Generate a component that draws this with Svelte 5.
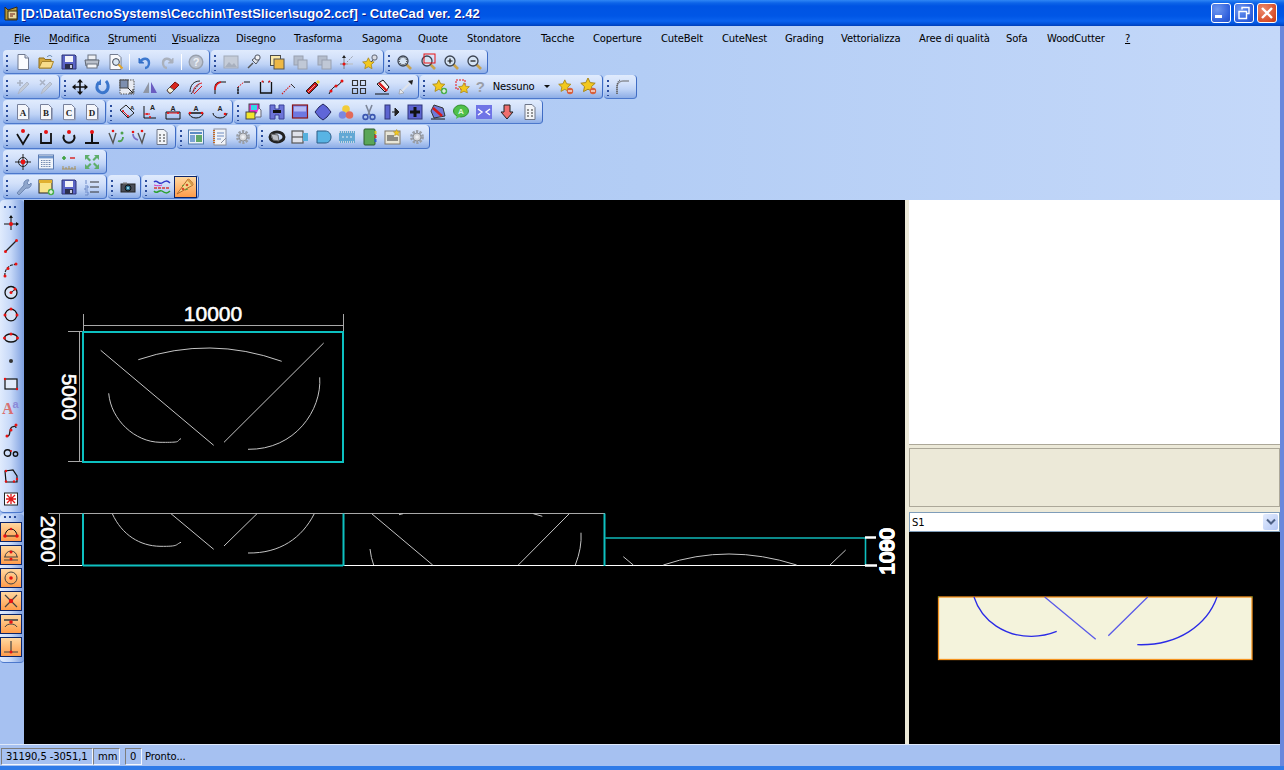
<script>
  const dot = (x, y, s = 1.5) => `<circle cx="${x}" cy="${y}" r="${s}" fill="#e81212"/>`;
  const star = (x, y, k, f = '#f2c81e') =>
    `<path transform="translate(${x} ${y}) scale(${k})" d="M8 1l2.2 4.6 5 .6-3.7 3.4 1 5L8 12.2 3.5 14.6l1-5L.8 6.2l5-.6z" fill="${f}" stroke="#a8861a" stroke-width="1"/>`;
  const badge = (x, y, c, plus) =>
    `<circle cx="${x}" cy="${y}" r="3.2" fill="${c}"/><path d="M${x - 2} ${y}h4${plus ? `M${x} ${y - 2}v4` : ''}" stroke="#fff" stroke-width="1.2"/>`;
  const doc = (t) =>
    `<path d="M2.5 .5h8l3 3v12h-11z" fill="#f4f6fb" stroke="#77809a"/><path d="M14.5 4v12h-11" fill="none" stroke="#9aa6c4"/><text x="8" y="12" font-size="9" font-weight="700" text-anchor="middle" font-family="Liberation Serif" fill="#222">${t}</text>`;
  const mag = (inner = '') =>
    `<path d="M10 10l5 5" stroke="#c9a24a" stroke-width="2.6"/><circle cx="7" cy="7" r="5" fill="#d6e4f4" stroke="#3c4452" stroke-width="1.3"/>${inner}`;
  const pencil = (mark) =>
    `<path d="M3 15l2-5 7-7 2 2-7 7z" fill="#c3cbd8" stroke="#a9b2c4" stroke-width=".8"/>${mark}`;
  const gear = `<circle cx="8" cy="8" r="5.4" fill="none" stroke="#9a9fa8" stroke-width="3" stroke-dasharray="2.2 1.2"/><circle cx="8" cy="8" r="4" fill="#d4d6da" stroke="#8d9198"/><circle cx="8" cy="8" r="1.7" fill="#eef0f4"/>`;
  const grayStack = `<rect x="2" y="2" width="9" height="9" fill="#b4bdcc" stroke="#98a0b0"/><rect x="6" y="6" width="9" height="9" fill="#c0c8d6" stroke="#98a0b0"/>`;
  const listDoc = `<path d="M3 .5h7l3 3v12H3z" fill="#f2f4f8" stroke="#6e7688"/><path d="M5 6h2M9 6h2M5 9h2M9 9h2M5 12h2M9 12h2" stroke="#333"/>`;
  const save = `<path d="M1 1h13l1 1v13H1z" fill="#5a64c6" stroke="#2f3578"/><rect x="4" y="2" width="8" height="6" fill="#f2f3f8"/><rect x="4" y="10" width="8" height="5" fill="#2c2f4c"/><rect x="9" y="11" width="2" height="3" fill="#c8cadd"/>`;

  const icons = {
    new: `<path d="M3 .5h7l3.5 3.5v11.5H3z" fill="#fbfcff" stroke="#6f7990"/><path d="M10 .5V4h3.5" fill="#d5dae6" stroke="#6f7990"/>`,
    open: `<path d="M1 4h5l1 1.5h6V14H1z" fill="#d5a93f" stroke="#8d6c1c"/><path d="M1 14l3-6.5h11.5L13 14z" fill="#f8dc8a" stroke="#a8842c"/><path d="M9 3c2-2 4-2 5 0" fill="none" stroke="#5b7fa8"/>`,
    save,
    print: `<rect x="4" y="1" width="8" height="5" fill="#eef0f4" stroke="#6a7280"/><path d="M1 6h14l-1 6H2z" fill="#b9bfca" stroke="#5f6672"/><rect x="3" y="10" width="10" height="4" fill="#f3f4f7" stroke="#6a7280"/>`,
    preview: `<path d="M2 .5h8l3 3v12H2z" fill="#f8f9fc" stroke="#737c90"/><circle cx="8" cy="8" r="3.4" fill="#d9e6f3" stroke="#3f4654"/><path d="M10.5 10.5l4 4" stroke="#e2a52a" stroke-width="2"/>`,
    undo: `<path d="M3 4v5h5" fill="#2f6bc4" stroke="#2f6bc4"/><path d="M4 8c3-5 9-4 9 1 0 3-2 5-4 5" fill="none" stroke="#3c78cf" stroke-width="2.4"/>`,
    redo: `<path d="M13 4v5H8" fill="#a9b0bc" stroke="#a9b0bc"/><path d="M12 8c-3-5-9-4-9 1 0 3 2 5 4 5" fill="none" stroke="#aab1bd" stroke-width="2.4"/>`,
    help: `<circle cx="8" cy="8" r="6.8" fill="#bcc3cf" stroke="#98a0ad" stroke-width="1.4"/><text x="8" y="12" font-size="11" font-weight="700" text-anchor="middle" font-family="Liberation Sans" fill="#eef1f6">?</text>`,
    image: `<rect x="1" y="2" width="14" height="12" fill="#c5ccd8" stroke="#a1a9b8"/><path d="M2 13l4-5 3 3 2-2 3 4z" fill="#a8b0be"/>`,
    pin: `<path d="M2 14l5-5" stroke="#555" stroke-width="1.4"/><path d="M6 6l4-3 3 3-3 4z" fill="#dfe2e8" stroke="#4f5562"/><rect x="9" y="1" width="5" height="5" rx="2" fill="#f2f3f6" stroke="#4f5562"/>`,
    copyYellow: `<rect x="1.5" y="1.5" width="10" height="10" fill="#fbe9a8" stroke="#4c4c4c"/><rect x="5" y="5" width="10" height="10" fill="#eeb845" stroke="#555"/>`,
    grayStack,
    axes: `<path d="M5 15V2M1 10h8" stroke="#777" stroke-width=".9"/><path d="M5 1l-2 3h4z" fill="#222"/><path d="M6 10l8-8" stroke="#888" stroke-dasharray="1.5 1.5"/><path d="M6 10h8" stroke="#bbb"/>${dot(5, 10)}`,
    starPin: `${star(0, 3, 0.8)}<path d="M9 8l3-3" stroke="#555"/><rect x="10" y="1" width="5" height="5" rx="2" fill="#d9dce4" stroke="#5f6572"/>`,
    zoomDots: mag(`<circle cx="7" cy="7" r="3.6" fill="none" stroke="#222" stroke-dasharray="1 1"/>`),
    zoomRect: mag(`<rect x="4" y="0" width="11" height="9" fill="none" stroke="#e81212"/>`),
    zoomIn: mag(`<path d="M4.5 7h5M7 4.5v5" stroke="#111" stroke-width="1.2"/>`),
    zoomOut: mag(`<path d="M4.5 7h5" stroke="#111" stroke-width="1.2"/>`),
    penPlus: pencil(`<path d="M2 4h6M5 1v6" stroke="#a9b2c4" stroke-width="1.6"/>`),
    penX: pencil(`<path d="M2 1l5 5M7 1L2 6" stroke="#a9b2c4" stroke-width="1.6"/>`),
    move: `<path d="M8 1v14M1 8h14" stroke="#111" stroke-width="1.6"/><path d="M8 0l-3 3.5h6zM8 16l-3-3.5h6zM0 8l3.5-3v6zM16 8l-3.5-3v6z" fill="#111"/>`,
    rotate: `<path d="M4 3c-3 3-3 8 1 10 4 2 9-1 8-7-.3-2-1-3-2-4" fill="none" stroke="#3b76cc" stroke-width="3"/><path d="M6 0v6H1z" fill="#3b76cc"/>`,
    scale: `<rect x="1" y="1" width="14" height="14" fill="#e8ebf2" stroke="#555" stroke-dasharray="1.5 1"/><rect x="1" y="1" width="8" height="8" fill="#7e8fae" stroke="#444"/><path d="M9 9l5 5M14 10v4h-4" fill="none" stroke="#222"/>`,
    mirror: `<path d="M7 3v11H1z" fill="#8f96a4"/><path d="M9 3v11h6z" fill="#6a5cc0"/>`,
    eraser: `<path d="M2 11l8-8 4 3-8 8H4z" fill="#d8261e" stroke="#7a1410"/><path d="M2 11l3-3 4 3-3 3H4z" fill="#f6f0d8" stroke="#555"/>`,
    offset: `<path d="M2 13C2 6 6 2 12 2" fill="none" stroke="#222"/><path d="M5 14C5 9 9 5 14 4" fill="none" stroke="#e81212"/><path d="M6 15L14 7" stroke="#e81212"/><path d="M3 15L11 5" stroke="#333" stroke-dasharray="2 1"/>`,
    fillet: `<path d="M3 15V8c0-3 2-5 5-5h6" fill="none" stroke="#111"/><path d="M3 11c0-4 2-7 6-8" fill="none" stroke="#e81212" stroke-width="1.6"/>`,
    chamfer: `<path d="M3 15V8M9 3h6" fill="none" stroke="#111"/><path d="M3 8l6-5" stroke="#e81212" stroke-dasharray="1.500 1"/><path d="M3 15V8" stroke="#111" stroke-dasharray="2 1"/>`,
    notch: `<path d="M2.500 3v11h11V3" fill="none" stroke="#111" stroke-width="1.300"/><path d="M5 3h1M10 3h1" stroke="#111"/>${dot(4.500, 2.500, 1)}${dot(11.500, 2.500, 1)}`,
    dashLine: `<path d="M1 15L10 6" stroke="#d81818" stroke-width="1.100" stroke-dasharray="1.500 1"/><path d="M10 5l4 4" stroke="#333"/>`,
    rocket: `<path d="M1 12l9-9 3 3-9 9z" fill="#c81818" stroke="#222"/><path d="M11 3l2-2 2 2-2 2z" fill="#f2d030"/><path d="M3 13l7-7" stroke="#f4a0a0"/>`,
    polyline: `<path d="M1 15c2-4 4-7 7-8s5-3 6-6" fill="none" stroke="#111"/>${dot(3, 12)}${dot(8, 7)}${dot(14, 2)}`,
    grid: `<path d="M1.5 1.5h5v5h-5zM9.5 1.5h5v5h-5zM1.5 9.5h5v5h-5zM9.5 9.5h5v5h-5z" fill="none" stroke="#333" stroke-width="1.1"/>`,
    tool: `<path d="M3 5l6-4 6 7-4 5z" fill="#f4f4f4" stroke="#111"/><path d="M5 4l8 8" stroke="#d81818" stroke-width="2.4"/><path d="M1 15h14" stroke="#111"/>`,
    arrows: `<path d="M3 13L13 3" stroke="#dfe3ea" stroke-width="2.200"/><path d="M15 1l-1 5-4-4z" fill="#222"/><path d="M1 15l1-5 4 4z" fill="#e4e7ee" stroke="#888" stroke-width=".5"/>`,
    starPlus: `${star(0, 0, 0.85)}${badge(12, 12, '#4caf4c', true)}`,
    starBox: `<path d="M1 1h9v9H1z" fill="none" stroke="#e81212" stroke-dasharray="2 1"/>${star(3, 3, 0.75)}`,
    starMinus: `${star(0, 0, 0.85)}${badge(12, 12, '#d8603c', false)}`,
    starMinus2: `${star(-1, -2, 1)}${badge(12, 12, '#d8603c', false)}`,
    filletGray: `<path d="M2 15V8c0-4 3-6 6-6h6" fill="none" stroke="#8b8f98" stroke-width="1.4"/><path d="M2 15V7c0-3 1-5 3-6" fill="none" stroke="#444" stroke-dasharray="1 1"/>`,
    docA: doc('A'),
    docB: doc('B'),
    docC: doc('C'),
    docD: doc('D'),
    dim1: `<path d="M1 6l6-5 8 8-6 5z" fill="none" stroke="#222"/><path d="M4 7l5 5" stroke="#e81212"/>${dot(4, 7, 1)}${dot(9, 12, 1)}<text x="11" y="6" font-size="6" font-weight="700" font-family="Liberation Sans" fill="#222">A</text>`,
    dim2: `<path d="M2 2v12h12" fill="none" stroke="#111"/><path d="M2 10l6 0" stroke="#e81212"/>${dot(5, 10, 1)}${dot(8, 13, 1)}<text x="8" y="6" font-size="7" font-weight="700" font-family="Liberation Sans" fill="#222">A</text>`,
    dim3: `<path d="M1 8h14v7H1z" fill="none" stroke="#111"/><path d="M2 9h12" stroke="#e81212"/>${dot(3, 9, 1)}${dot(13, 9, 1)}<text x="8" y="7" font-size="7" font-weight="700" text-anchor="middle" font-family="Liberation Sans" fill="#222">A</text>`,
    dim4: `<path d="M1 9a7 5 0 0 0 14 0z" fill="none" stroke="#111"/><path d="M1 9h14" stroke="#111"/>${dot(2, 9, 1.3)}${dot(14, 9, 1.3)}<text x="8" y="7" font-size="7" font-weight="700" text-anchor="middle" font-family="Liberation Sans" fill="#222">A</text>`,
    dim5: `<path d="M1 9a7 5 0 0 0 14 0" fill="none" stroke="#111"/>${dot(13, 10, 1.3)}<text x="8" y="7" font-size="7" font-weight="700" text-anchor="middle" font-family="Liberation Sans" fill="#222">A</text>`,
    colorFile: `<rect x="3" y="0" width="10" height="9" fill="#ea2fd0" stroke="#444"/><rect x="5" y="1" width="6" height="5" fill="#33d8e8"/><rect x="0" y="8" width="9" height="7" fill="#f2e62a" stroke="#444"/><path d="M13 4l2 2v7H9" fill="#e8ecf2" stroke="#667"/>`,
    hMinus: `<path d="M1 1h5v4h4V1h5v14h-5v-4H6v4H1z" fill="#6c74d8" stroke="#3a4098"/><rect x="4" y="6" width="8" height="3" fill="#111"/>`,
    blueRect: `<rect x=".5" y="1" width="15" height="13" fill="#6e78e2" stroke="#8c1414" stroke-width="1.2"/><rect x="2" y="2.5" width="12" height="5" fill="#b4baf4"/>`,
    blueBlob: `<path d="M4 3l4-3 4 3 4 5-4 5-4 3-4-3-4-5z" fill="#5f66d8" stroke="#23255e"/>`,
    circles: `<circle cx="8" cy="5" r="3.8" fill="#f2cc3a"/><circle cx="4.5" cy="11" r="3.8" fill="#7a88e0"/><circle cx="11.5" cy="11" r="3.8" fill="#e26a5a"/>`,
    scissors: `<path d="M5 1l4 10M11 1L7 11" stroke="#7d8698" stroke-width="1.6"/><circle cx="4.5" cy="13" r="2.4" fill="none" stroke="#3b56b0" stroke-width="1.6"/><circle cx="11.5" cy="13" r="2.4" fill="none" stroke="#3b56b0" stroke-width="1.6"/>`,
    barArrow: `<rect x="1" y="1" width="5" height="14" fill="#5c64d0" stroke="#2f3578"/><path d="M8 8h4M11 4l4 4-4 4z" fill="#222" stroke="#222"/>`,
    plusBox: `<rect x="1" y="1" width="14" height="14" fill="#5c64d0" stroke="#2f3578"/><path d="M8 3v10M3 8h10" stroke="#111" stroke-width="3"/>`,
    penCircle: `<path d="M4 1l9 3 2 8-11 2-3-7z" fill="#6e78d6" stroke="#333"/><path d="M3 4l9 8" stroke="#d81818" stroke-width="2.4"/><path d="M1 15h14" stroke="#111"/>`,
    speech: `<ellipse cx="8" cy="7" rx="7.5" ry="6" fill="#4fc04a" stroke="#2f8c2c"/><path d="M4 11l-1 4 5-3z" fill="#4fc04a"/><text x="8" y="10" font-size="8" font-weight="700" text-anchor="middle" font-family="Liberation Sans" fill="#dff5dc">A</text>`,
    compress: `<rect x="0" y="1" width="16" height="14" fill="#6f74e6"/><path d="M2 5l4 3-4 3M14 5l-4 3 4 3" fill="none" stroke="#fff" stroke-width="1.4"/>`,
    down: `<path d="M5 1h6v7h3l-6 7-6-7h3z" fill="#ef6e6e" stroke="#222"/>`,
    listDoc,
    vDot: `<path d="M2 5l6 10 6-10" fill="none" stroke="#111" stroke-width="1.7"/>${dot(8, 2, 2)}`,
    uDot: `<path d="M3 4v10h10V4" fill="none" stroke="#111" stroke-width="1.8"/>${dot(8, 3, 2)}`,
    arcDot: `<path d="M3 6a5.5 5.5 0 1 0 10 0" fill="none" stroke="#111" stroke-width="2"/>${dot(8, 3, 2)}`,
    tDot: `<path d="M8 4v9M1 14h14" stroke="#111" stroke-width="2"/>${dot(8, 3, 2)}`,
    vGreen: `<path d="M1 4l4 10 3-10" fill="none" stroke="#555" stroke-width="1.4"/>${dot(5, 2, 1.3)}<path d="M10 12c3 1 5-1 5-4" fill="none" stroke="#4ca04c" stroke-width="1.8"/><circle cx="14" cy="4" r="1.5" fill="#4ca04c"/>`,
    vPurple: `<path d="M7 4l4 10 3-10" fill="none" stroke="#555" stroke-width="1.4"/>${dot(2, 3, 1.3)}<path d="M2 5c0 3 2 5 5 6" fill="none" stroke="#7a70c8" stroke-width="1.8"/>${dot(11, 2, 1.3)}`,
    layout: `<rect x=".5" y="1" width="15" height="14" fill="#eef2f8" stroke="#4f7cb0"/><rect x="2" y="3" width="12" height="2" fill="#5c8cc4"/><rect x="2" y="6" width="5" height="7" fill="#7ca4d4"/><rect x="8" y="6" width="6" height="7" fill="#5fa86a"/>`,
    notebook: `<rect x="2" y="0" width="12" height="16" fill="#f0f3f8" stroke="#8a90a0"/><path d="M2 1v14" stroke="#c86820" stroke-width="2" stroke-dasharray="1 1"/><path d="M5 4h7M5 7h7M5 10h4" stroke="#6c8ac0"/><path d="M9 14l5-5" stroke="#8a90a0"/>`,
    gear,
    ring: `<ellipse cx="8" cy="8" rx="7" ry="5" fill="none" stroke="#222" stroke-width="3"/><path d="M2 5l7 1 1 6-6-1z" fill="#bcc0c8" stroke="#666"/>`,
    boxBlue: `<rect x="0" y="2" width="11" height="12" fill="#dfe2ea" stroke="#555" stroke-width="1.2"/><path d="M0 8h11" stroke="#555" stroke-width="1.2"/><rect x="11" y="4" width="5" height="8" fill="#56b0dc"/>`,
    dShape: `<path d="M1 2h8c4 0 6 3 6 6s-2 6-6 6H1z" fill="#58b4e4" stroke="#2c5c86"/>`,
    film: `<rect x="0" y="2" width="16" height="12" fill="#62a8d4"/><path d="M0 3h16M0 13h16" stroke="#c8d4e0" stroke-dasharray="1 1" stroke-width="2"/><path d="M3 8h2M7 8h2M11 8h2" stroke="#e8eef6"/>`,
    greenBook: `<rect x="2" y="0" width="11" height="16" rx="1" fill="#5aa658" stroke="#2c5c2c"/><path d="M13.5 2v3" stroke="#d8c820" stroke-width="2"/><path d="M13.5 6v3" stroke="#d83030" stroke-width="2"/><path d="M13.5 10v3" stroke="#3060d0" stroke-width="2"/>`,
    noteStar: `<rect x="0" y="2" width="15" height="13" fill="#e8e6d8" stroke="#80786a"/><path d="M2 7h7M2 9h11M2 11h11" stroke="#333"/>${star(8, 0, 0.45)}`,
    cross: `<path d="M8 0v16M0 8h16" stroke="#222"/><circle cx="8" cy="8" r="4.5" fill="none" stroke="#222"/>${dot(8, 8, 2.4)}`,
    listWin: `<rect x=".5" y="1" width="15" height="14" fill="#f0f4fa" stroke="#5a7ab0"/><rect x="1" y="2" width="14" height="2.4" fill="#7398cc"/><path d="M3 6.5h10M3 8.5h10M3 10.5h10M3 12.5h10" stroke="#6c84ac" stroke-dasharray="1 .6"/>`,
    ruler: `<path d="M1 4h4M3 2v4" stroke="#3ca03c" stroke-width="1.6"/><path d="M9 4h5" stroke="#d83838" stroke-width="1.6"/><path d="M1 15h14M2 15v-3M5 15v-2M8 15v-3M11 15v-2M14 15v-3" stroke="#a89058"/>`,
    greenArrows: `<path d="M1 1h5L4 3l3 3-1.500 1.500L2.500 4.500 1 6zM15 1v5l-2-2-3 3-1.500-1.500 3-3L10 1zM1 15v-5l2 2 3-3 1.500 1.500-3 3L6 15zM15 15h-5l2-2-3-3 1.500-1.500 3 3L15 10z" fill="#5fae6a"/>`,
    wrench: `<path d="M2 14l7-8c-1-3 2-6 5-5l-2 3 2 2 2-2c1 3-2 6-5 5l-7 7z" fill="#8fa6cc" stroke="#6f88b4"/>`,
    yellowWin: `<rect x="1" y="1" width="13" height="13" fill="#f8e48a" stroke="#222"/><rect x="1" y="1" width="13" height="3" fill="#e0b030"/>${badge(13, 13, '#4caf4c', true)}`,
    numList: `<path d="M6 3h9M6 8h9M6 13h9" stroke="#333" stroke-width="1.2"/><path d="M2 1v4M1 7h3v2H1v2h3M1 13h3v3H1" fill="none" stroke="#6c8ac8"/>`,
    camera: `<rect x="1" y="5" width="14" height="8" fill="#4a4e58" stroke="#222"/><rect x="3" y="3.500" width="4" height="2" fill="#777"/><circle cx="8" cy="9" r="3" fill="#2a6a88" stroke="#111"/><circle cx="8" cy="9" r="1.200" fill="#8cd0e0"/>`,
    waves: `<path d="M0 3c3-3 5 3 8 1s5-3 8 0" fill="none" stroke="#2f38c8" stroke-width="1.500"/><path d="M0 9h16" stroke="#d83838" stroke-width="1.500" stroke-dasharray="3 1"/><path d="M0 12c3 4 5-2 8 0s5 3 8 0" fill="none" stroke="#2ca030" stroke-width="1.500"/><path d="M0 6c3 1 6 1 8 0" stroke="#d030c0" fill="none"/>`,
    pizza: `<path d="M0 15L11 0c3 1 5 4 5 6L0 15z" fill="#f4d68a" stroke="#b86a28"/><path d="M11 0c3 1 5 4 5 6l-1.500 1c-1-2-2.500-4-4.500-5.500z" fill="#d89a4a"/><circle cx="6" cy="10" r="1.300" fill="#d84a2a"/><circle cx="10" cy="6" r="1.300" fill="#d84a2a"/><path d="M8 11l3-1M5 7l2-1" stroke="#5a9a3a"/>`,
    lAxes: `<path d="M8 1v14M1 9h14" stroke="#111"/><path d="M8 0l-2 3h4zM16 9l-3-2v4z" fill="#111"/>${dot(8, 9, 2)}`,
    lLine: `<path d="M3 13L13 3" stroke="#222" stroke-width="1.200"/>${dot(2.500, 13.500)}${dot(13.500, 2.500)}`,
    lArc: `<path d="M2 15c-1-5 3-10 7-11l5-1" fill="none" stroke="#222" stroke-dasharray="3 1" stroke-width="1.200"/>${dot(2, 15)}${dot(5, 7.500)}${dot(13, 3)}`,
    lCircleR: `<circle cx="8" cy="8.500" r="6" fill="#d6e2f6" stroke="#111" stroke-width="1.300"/><path d="M8 8.500l4-3" stroke="#222"/>${dot(8, 8.500)}${dot(12, 5)}`,
    lCircle: `<circle cx="8" cy="8" r="5.800" fill="#d6e2f6" stroke="#111" stroke-width="1.300"/>${dot(8, 2)}${dot(2, 8)}${dot(14, 8)}`,
    lEllipse: `<ellipse cx="8" cy="8" rx="6.500" ry="4" fill="#d6e2f6" stroke="#111" stroke-width="1.300"/>${dot(8, 4)}${dot(1.500, 8)}${dot(14.500, 8)}`,
    lPoint: `<circle cx="8" cy="8" r="2" fill="#333"/>`,
    lRect: `<rect x="2" y="3" width="12" height="10" fill="#e2ebfa" stroke="#111" stroke-width="1.200"/>${dot(2, 3, 1.200)}${dot(14, 13, 1.200)}`,
    lText: `<text x="-1" y="15" font-size="16" font-family="Liberation Serif" font-weight="700" fill="#d87070">A</text><text x="9.500" y="9" font-size="11" font-weight="700" font-family="Liberation Sans" fill="#8a8ad8">a</text>`,
    lSpline: `<path d="M3 14c6 1 2-7 6-9 2-1 4-1 4 1" fill="none" stroke="#222" stroke-width="1.300"/>${dot(4, 14)}${dot(8, 8)}${dot(13, 3)}`,
    lOo: `<circle cx="4.500" cy="8" r="3.200" fill="none" stroke="#111" stroke-width="1.400"/><circle cx="12.500" cy="9" r="2.200" fill="none" stroke="#111" stroke-width="1.400"/>${dot(8, 6, 1)}`,
    lPoly: `<path d="M2 3l8-1 4 6v6H3z" fill="none" stroke="#111" stroke-width="1.200"/>${dot(3, 3, 1.200)}${dot(11, 13.500, 1.200)}${dot(3, 13.500, 1.200)}${dot(14, 11, 1.200)}`,
    lRedBox: `<rect x="1.500" y="2" width="13" height="12" fill="#fff" stroke="#222"/><path d="M8 3v10M3 8h10M4 4l8 8M12 4l-8 8" stroke="#e01818" stroke-width="1.300"/>`,
    sArc: `<path d="M2 12a6 7 0 0 1 12 0" fill="none" stroke="#111"/><path d="M2 12h12" stroke="#111"/>${dot(2, 12, 1.800)}${dot(14, 12, 1.800)}${dot(8, 5, 1.200)}`,
    sArc2: `<path d="M2 10a6 6 0 0 1 12 0" fill="none" stroke="#444"/><path d="M1 10h14" stroke="#444"/><path d="M1 13h14" stroke="#444"/>${dot(8, 5, 1.500)}${dot(8, 12, 1.500)}`,
    sCircle: `<circle cx="8" cy="8" r="6" fill="none" stroke="#444"/>${dot(8, 8, 1.800)}`,
    sCross: `<path d="M2 2l12 12M14 2L2 14" stroke="#444" stroke-width="1.200"/>${dot(8, 8, 2.200)}`,
    sTop: `<path d="M1 4h14" stroke="#444" stroke-width="1.600"/><path d="M2 11c2-4 10-4 12 0" fill="none" stroke="#444"/>${dot(8, 6, 1.800)}`,
    sPerp: `<path d="M8 2v11M1 13h14" stroke="#444" stroke-width="1.200"/>${dot(8, 13, 1.500)}`
  };

  const rows = [
    [
      ['new', 'open', 'save', 'print', 'preview', 'sep', 'undo', 'redo', 'sep', 'help'],
      ['image', 'pin', 'copyYellow', 'grayStack', 'grayStack', 'axes', 'starPin'],
      ['zoomDots', 'zoomRect', 'zoomIn', 'zoomOut']
    ],
    [
      ['penPlus', 'penX'],
      ['move', 'rotate', 'scale', 'mirror', 'eraser', 'offset', 'fillet', 'chamfer', 'notch', 'dashLine', 'rocket', 'polyline', 'grid', 'tool', 'arrows'],
      ['starPlus', 'starBox', 'combo', 'starMinus', 'starMinus2'],
      ['filletGray']
    ],
    [
      ['docA', 'docB', 'docC', 'docD'],
      ['dim1', 'dim2', 'dim3', 'dim4', 'dim5'],
      ['colorFile', 'hMinus', 'blueRect', 'blueBlob', 'circles', 'scissors', 'barArrow', 'plusBox', 'penCircle', 'speech', 'compress', 'down', 'listDoc']
    ],
    [
      ['vDot', 'uDot', 'arcDot', 'tDot', 'vGreen', 'vPurple', 'listDoc'],
      ['layout', 'notebook', 'gear'],
      ['ring', 'boxBlue', 'dShape', 'film', 'greenBook', 'noteStar', 'gear']
    ],
    [['cross', 'listWin', 'ruler', 'greenArrows']],
    [['wrench', 'yellowWin', 'save', 'numList'], ['camera'], ['waves', 'pizza*']]
  ];

  const menus = [
    ['File', 14, true], ['Modifica', 49, true], ['Strumenti', 108, true], ['Visualizza', 172, true],
    ['Disegno', 236], ['Trasforma', 294], ['Sagoma', 362], ['Quote', 418], ['Stondatore', 467],
    ['Tacche', 541], ['Coperture', 593], ['CuteBelt', 661], ['CuteNest', 722], ['Grading', 785],
    ['Vettorializza', 841], ['Aree di qualità', 919], ['Sofa', 1006], ['WoodCutter', 1047], ['?', 1125, true]
  ];

  const drawTools = ['lAxes', 'lLine', 'lArc', 'lCircleR', 'lCircle', 'lEllipse', 'lPoint', 'lRect', 'lText', 'lSpline', 'lOo', 'lPoly', 'lRedBox'];
  const snapTools = ['sArc', 'sArc2', 'sCircle', 'sCross', 'sTop', 'sPerp'];

  const menuWidth = (i) => (i + 1 < menus.length ? menus[i + 1][1] - menus[i][1] : 40);
</script>

{#snippet icon(name)}
  <svg class="ico" viewBox="0 0 16 16" width="16" height="16">{@html icons[name]}</svg>
{/snippet}

<div class="app">
  <header class="titlebar">
    <svg class="logo" viewBox="0 0 16 16" width="16" height="16">
      <path d="M1 15V2l3 3 9-3v13z" fill="#b89a38" stroke="#3a2c10" />
      <rect x="4" y="6" width="9" height="8" fill="#e8d8a0" stroke="#3a2c10" />
      <path d="M6 9h5M6 11h3" stroke="#6a1818" />
    </svg>
    <span class="title">[D:\Data\TecnoSystems\Cecchin\TestSlicer\sugo2.ccf] - CuteCad ver. 2.42</span>
    <div class="caption">
      <button class="cap" aria-label="Riduci a icona"><i class="min"></i></button>
      <button class="cap" aria-label="Ripristina">
        <svg viewBox="0 0 14 14" width="14" height="14"><path d="M5 3.500V1.500h7v6h-2.500M2 5.500h7.500v7H2z" fill="none" stroke="#fff" stroke-width="1.400" /></svg>
      </button>
      <button class="cap close" aria-label="Chiudi">
        <svg viewBox="0 0 14 14" width="14" height="14"><path d="M2 2l10 10M12 2L2 12" stroke="#fff" stroke-width="2.400" /></svg>
      </button>
    </div>
  </header>

  <div class="frame">
    <div class="dock">
      <nav class="menubar">
        {#each menus as [label, , underline], i}
          <span class="menu" style="width:{menuWidth(i)}px">{#if underline}<u>{label[0]}</u>{label.slice(1)}{:else}{label}{/if}</span>
        {/each}
      </nav>

      {#each rows as row}
        <div class="row">
          {#each row as band}
            <div class="band">
              <i class="grip"></i>
              {#each band as name}
                {#if name === 'sep'}
                  <i class="sep"></i>
                {:else if name === 'combo'}
                  <div class="combo">
                    <b>?</b>
                    <span>Nessuno</span>
                    <i class="caret"></i>
                  </div>
                {:else if name.endsWith('*')}
                  <div class="btn on">{@render icon(name.slice(0, -1))}</div>
                {:else}
                  <div class="btn">{@render icon(name)}</div>
                {/if}
              {/each}
            </div>
          {/each}
        </div>
      {/each}
    </div>

    <main class="work">
      <aside class="side">
        <div class="vband">
          <i class="vgrip"></i>
          {#each drawTools as name}
            <div class="vbtn">{@render icon(name)}</div>
          {/each}
        </div>
        <div class="vband snaps">
          <i class="vgrip"></i>
          {#each snapTools as name}
            <div class="vbtn on">{@render icon(name)}</div>
          {/each}
        </div>
      </aside>

      <section class="canvas">
        <svg viewBox="24 200 881 544" width="881" height="544">
          <g class="dim">
            <path d="M83.500 314v18M343.500 314v18M83 325.500h260M68 331.500h15M68 461.500h15M79.500 332v130" />
            <text x="213" y="321" text-anchor="middle">10000</text>
            <text transform="translate(62 397) rotate(90)" text-anchor="middle">5000</text>
          </g>
          <rect class="outline" x="83" y="332" width="260" height="130" />
          <g class="cut">
            <path d="M100.700 350.300L213.700 445.300M224 442.300L323.700 343" />
            <path d="M138.300 359.700Q210 335.500 281.700 361.300" />
            <path d="M108.700 393.300C111 420 135 442 160 442.300S175 441 181 438.700" />
            <path d="M319.700 377.300C322 410 295 450 248 449.300" />
          </g>

          <g class="dim">
            <path d="M59.500 514v52" />
            <text transform="translate(41 539) rotate(90)" text-anchor="middle">2000</text>
          </g>
          <path class="gray" d="M48 513.500H605" />
          <path class="white" d="M48 565.500H865" />
          <path class="teal" d="M83 513.500V566M343.500 513.500V566M604.500 513.500V566" stroke-width="2" />
          <path class="teal" d="M83 565.500H343" stroke-width="2" />
          <path class="teal dark" d="M605 538H866" />
          <path class="teal" d="M865.500 538V565" stroke-width="1.600" />
          <g class="cut">
            <path d="M112.300 513.700C122 535 140 546 160 546.300S175 544.500 181 542.300" />
            <path d="M171 513.700L213.700 549.300M224 546L257 513.700" />
            <path d="M314.300 513.700C302 538 280 553.500 248 553" />
            <path d="M371.700 513.700L432.700 565M370 549Q371 558 373.700 565M399 514.700L403 513.700" />
            <path d="M533.300 513.700L542.300 516.300M569.300 513.700L518.300 565" />
            <path d="M581 532.700Q582 548 575.300 565" />
            <path d="M623.300 556.700L633.300 565M830 565L845.700 550" />
            <path d="M663.300 565Q728 543 796.700 565" />
          </g>
          <path class="white thick" d="M865 537.500H876M865 565.500H877" />
          <g class="overlap">
            <text transform="translate(894 551.500) rotate(-90)" text-anchor="middle">1080</text>
            <text transform="translate(894 551.500) rotate(-90)" text-anchor="middle">1000</text>
          </g>
        </svg>
      </section>

      <aside class="panel">
        <div class="blank"></div>
        <div class="beige"></div>
        <div class="select">
          <span>S1</span>
          <div class="drop">
            <svg viewBox="0 0 10 8" width="10" height="8"><path d="M1 1.500l4 4 4-4" fill="none" stroke="#4d6185" stroke-width="2" /></svg>
          </div>
        </div>
        <div class="preview">
          <svg viewBox="909 532 371 212" width="371" height="212">
            <rect x="938.500" y="597" width="313.500" height="62.500" fill="#f4f3dc" stroke="#f5931f" stroke-width="1.300" />
            <path d="M938 597h1M1251.500 597h1" stroke="#2aa02a" />
            <g fill="none" stroke="#2a2ae6" stroke-width="1.300">
              <path d="M974 597C982 622 1006 636.500 1031.700 636.300Q1045 636 1056.700 631.300" />
              <path d="M1044.700 597L1095.700 639.300M1108.300 635.700L1147.700 597" stroke="#5a5ae8" />
              <path d="M1217 597C1207 625 1178 646 1137.300 644.700" />
            </g>
          </svg>
        </div>
      </aside>
    </main>

    <footer class="status">
      <span class="cell coords">31190,5 -3051,1</span>
      <span class="cell unit">mm</span>
      <span class="cell zero">0</span>
      <span class="ready">Pronto...</span>
    </footer>
  </div>
  <div class="bottom"></div>
</div>

<style>
  :global(body) {
    margin: 0;
    background: #000;
  }

  .app {
    width: 1284px;
    height: 770px;
    display: flex;
    flex-direction: column;
    overflow: hidden;
    font-family: "Liberation Sans", Arial, sans-serif;
    font-size: 11px;
    color: #000;
  }

  .titlebar {
    height: 26px;
    flex: none;
    display: flex;
    align-items: center;
    padding: 0 7px 0 4px;
    background: linear-gradient(180deg, #2f86f5 0, #0d64e8 3px, #0054e3 6px, #0056e6 16px, #0a62ee 21px, #0050d8 24px, #003fb8 26px);
  }

  .logo {
    flex: none;
  }

  .title {
    margin-left: 1px;
    color: #fff;
    font-family: "Liberation Sans", sans-serif;
    font-weight: 700;
    font-size: 13px;
    letter-spacing: 0.1px;
    text-shadow: 1px 1px 0 #0f1a89;
    white-space: nowrap;
  }

  .caption {
    margin-left: auto;
    display: flex;
    gap: 3px;
  }

  .cap {
    width: 20px;
    height: 20px;
    box-sizing: border-box;
    padding: 0;
    display: grid;
    place-items: center;
    border: 1px solid #fff;
    border-radius: 3px;
    background: radial-gradient(circle at 30% 30%, #6f98f0, #2f5fdc 70%, #2450c4);
  }

  .cap.close {
    background: radial-gradient(circle at 30% 30%, #ec8a6c, #d8502c 70%, #bf3a14);
  }

  .min {
    display: block;
    width: 7px;
    height: 3px;
    background: #fff;
    margin: 7px 6px 0 0;
  }

  .frame {
    flex: 1;
    min-height: 0;
    display: flex;
    flex-direction: column;
    border-right: 4px solid #6a87dc;
  }

  .dock {
    flex: none;
    height: 174px;
    background: linear-gradient(90deg, #a8c3f2 0, #b3cdf5 50%, #c4d8f9 100%);
  }

  .menubar {
    height: 24px;
    display: flex;
    align-items: center;
    padding-left: 14px;
    box-sizing: border-box;
    font-family: "DejaVu Sans", sans-serif;
    font-size: 10px;
    letter-spacing: -0.15px;
  }

  .menu {
    flex: none;
    white-space: nowrap;
  }

  .row {
    height: 25px;
    display: flex;
    gap: 1px;
    padding-left: 3px;
  }

  .row:nth-child(6) .band:first-child,
  .row:nth-child(7) .band:first-child {
    padding-right: 2px;
  }

  .row:nth-child(4) .band:last-child .btn {
    width: 23px;
  }

  .band {
    height: 24px;
    box-sizing: border-box;
    display: flex;
    align-items: center;
    padding: 0 1px 0 8px;
    position: relative;
    border-radius: 4px;
    border-right: 1px solid #3f6cc4;
    border-bottom: 1px solid #4c78cc;
    background: linear-gradient(180deg, #e0ebfd 0, #d3e1fa 35%, #bfd3f6 62%, #8dade6 100%);
  }

  .grip {
    position: absolute;
    left: 3px;
    top: 5px;
    width: 2px;
    height: 16px;
    background: repeating-linear-gradient(180deg, #2a4c9c 0 2px, transparent 2px 5px);
  }

  .btn {
    width: 23.25px;
    height: 22px;
    box-sizing: border-box;
    display: grid;
    place-items: center;
  }

  .btn.on {
    border: 1px solid #0a246a;
    background: linear-gradient(180deg, #ffd8a0, #ff9c4a);
  }

  .ico {
    display: block;
    overflow: visible;
  }

  .sep {
    width: 5.5px;
    height: 16px;
    flex: none;
    background: linear-gradient(90deg, transparent 2px, #fff 2px, #fff 3px, transparent 3px);
  }

  .combo {
    width: 79.25px;
    display: flex;
    align-items: center;
    font-family: "DejaVu Sans", sans-serif;
    font-size: 10px;
    letter-spacing: -0.15px;
  }

  .combo b {
    width: 18px;
    padding-left: 1px;
    box-sizing: border-box;
    font-family: "Liberation Sans", sans-serif;
    font-size: 15px;
    font-weight: 700;
    color: #9a9ea8;
  }

  .caret {
    margin-left: auto;
    margin-right: 4px;
    border: 3px solid transparent;
    border-top: 3px solid #111;
    border-bottom: 0;
  }

  .work {
    flex: 1;
    min-height: 0;
    display: flex;
  }

  .side {
    width: 24px;
    flex: none;
    background: #a6c1f1;
  }

  .vband {
    height: 313px;
    box-sizing: border-box;
    border-radius: 4px;
    border-bottom: 1px solid #4c78cc;
    background: linear-gradient(90deg, #e0ebfd 0, #c6d8f8 45%, #7d9fdf 100%);
    padding-top: 11.5px;
    position: relative;
  }

  .snaps {
    height: 149px;
    margin-top: 1px;
    padding-top: 8px;
  }

  .vgrip {
    position: absolute;
    top: 6px;
    left: 4px;
    width: 15px;
    height: 2px;
    background: repeating-linear-gradient(90deg, #2a4c9c 0 2px, transparent 2px 5px);
  }

  .snaps .vgrip {
    top: 2px;
  }

  .vbtn {
    width: 22px;
    height: 23px;
    box-sizing: border-box;
    display: grid;
    place-items: center;
  }

  .vbtn.on {
    height: 20px;
    margin-bottom: 3px;
    border: 1px solid #0a246a;
    background: linear-gradient(180deg, #ffd8a0, #ff9c4a);
  }

  .canvas {
    width: 881px;
    flex: none;
    background: #000;
  }

  .canvas svg,
  .preview svg {
    display: block;
  }

  .canvas path,
  .canvas rect {
    fill: none;
  }

  .dim path {
    stroke: #a8a8a8;
    stroke-width: 1;
  }

  .dim text {
    font-size: 21px;
    fill: #fff;
    stroke: #fff;
    stroke-width: 0.55;
  }

  .outline {
    stroke: #0cc0c0;
    stroke-width: 2;
  }

  .cut path {
    stroke: #c4c4c4;
    stroke-width: 1;
  }

  .gray {
    stroke: #a8a8a8;
    stroke-width: 1;
  }

  .white {
    stroke: #fff;
    stroke-width: 1;
  }

  .white.thick {
    stroke-width: 2.5;
  }

  .teal {
    stroke: #0ec0c0;
  }

  .teal.dark {
    stroke: #0b8a8a;
    stroke-width: 2;
  }

  .overlap text {
    font-size: 21px;
    fill: #fff;
    stroke: #fff;
    stroke-width: 1.4;
  }

  .panel {
    flex: 1;
    min-width: 0;
    display: flex;
    flex-direction: column;
    padding-left: 4px;
    background: #ece9d8;
  }

  .blank {
    height: 244px;
    flex: none;
    background: #fff;
    border-bottom: 1px solid #aca899;
  }

  .beige {
    height: 57px;
    flex: none;
    margin-top: 3px;
    border: 1px solid #aca899;
  }

  .select {
    height: 20px;
    flex: none;
    margin-top: 5px;
    box-sizing: border-box;
    display: flex;
    align-items: center;
    justify-content: space-between;
    padding: 0 1px 0 2px;
    background: #fff;
    border: 1px solid #7f9db9;
    font-family: "DejaVu Sans", sans-serif;
    font-size: 10px;
  }

  .drop {
    width: 15px;
    height: 16px;
    display: grid;
    place-items: center;
    border-radius: 2px;
    background: linear-gradient(135deg, #e2ebfd, #b4c8f5);
  }

  .preview {
    flex: 1;
    min-height: 0;
    background: #000;
  }

  .status {
    height: 22px;
    flex: none;
    box-sizing: border-box;
    display: flex;
    align-items: center;
    padding: 2px 0 0 1px;
    background: #a6c1f1;
    border-top: 1px solid #dfe9fb;
    font-family: "DejaVu Sans", sans-serif;
    font-size: 10px;
    letter-spacing: -0.1px;
    white-space: nowrap;
  }

  .cell {
    height: 17px;
    box-sizing: border-box;
    display: flex;
    align-items: center;
    padding-left: 4px;
    border: 1px solid;
    border-color: #7d7d7d #f4f7fd #f4f7fd #7d7d7d;
  }

  .coords {
    width: 92px;
  }

  .unit {
    width: 27px;
  }

  .zero {
    width: 17px;
    margin-left: 5px;
  }

  .ready {
    margin-left: 3px;
  }

  .bottom {
    height: 4px;
    flex: none;
    background: #2f7be8;
  }
</style>
